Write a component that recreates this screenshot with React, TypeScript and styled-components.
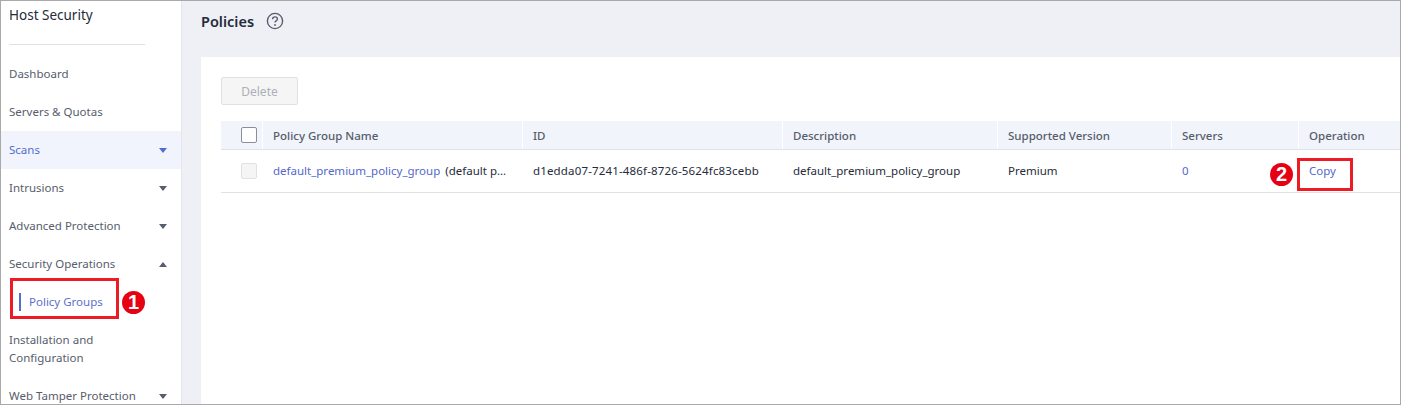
import React from "react";
import styled, { createGlobalStyle } from "styled-components";

const Global = createGlobalStyle`
  html, body { margin: 0; padding: 0; background: #fff; }
  body { font-family: "Noto Sans", "Open Sans", sans-serif; font-size: 11.5px; color: #252b3a; }
`;

const Frame = styled.div`
  position: relative;
  box-sizing: border-box;
  width: 1401px;
  height: 405px;
  border: 1px solid #a9a9a9;
  display: flex;
  overflow: hidden;
  background: #eef0f5;
`;

const Sidebar = styled.aside`
  flex: 0 0 180px;
  background: #fff;
  display: flex;
  flex-direction: column;
  height: 420px;
`;

const SideTitle = styled.div`
  height: 44px;
  margin: 0 36px 0 8px;
  box-sizing: border-box;
  padding-top: 4px;
  font-size: 13.5px;
  line-height: 20px;
  color: #252b3a;
  border-bottom: 1px solid #dfe1e6;
  flex: none;
`;

const SideList = styled.nav`
  margin-top: 10px;
  display: flex;
  flex-direction: column;
`;

const SideItem = styled.div<{ $active?: boolean; $tall?: boolean }>`
  display: flex;
  align-items: center;
  justify-content: space-between;
  box-sizing: border-box;
  min-height: ${(p) => (p.$tall ? "56px" : "38px")};
  padding: 0 14px 0 8px;
  line-height: 18px;
  color: ${(p) => (p.$active ? "#526ecc" : "#575d6c")};
  background: ${(p) => (p.$active ? "#f1f4fc" : "#fff")};
`;

const SubItem = styled.div`
  height: 38px;
  box-sizing: border-box;
  padding: 0 0 1px 18px;
  display: flex;
  align-items: center;
  gap: 8px;
  color: #5e6fcb;
  &::before {
    content: "";
    width: 2px;
    height: 18px;
    background: #526ecc;
  }
`;

const Caret = styled.span<{ $up?: boolean; $active?: boolean }>`
  width: 0;
  height: 0;
  border-left: 4px solid transparent;
  border-right: 4px solid transparent;
  ${(p) =>
    p.$up
      ? `border-bottom: 5px solid #575d6c;`
      : `border-top: 5px solid ${p.$active ? "#526ecc" : "#575d6c"};`}
`;

const Main = styled.main`
  flex: 1;
  min-width: 0;
  display: flex;
  flex-direction: column;
  border-left: 1px solid #e4e6ec;
`;

const Header = styled.header`
  height: 56px;
  flex: none;
  box-sizing: border-box;
  padding: 8px 0 0 19px;
  display: flex;
  align-items: flex-start;
  gap: 12px;
`;

const Title = styled.h1`
  margin: 0;
  font-size: 14.5px;
  line-height: 24px;
  font-weight: 600;
  color: #252b3a;
`;

const HelpIcon = styled.svg`
  width: 18px;
  height: 18px;
  margin-top: 3px;
`;

const Panel = styled.section`
  flex: 1;
  margin-left: 19px;
  background: #fff;
  padding: 20px 0 0 20px;
`;

const DeleteButton = styled.button`
  display: block;
  box-sizing: border-box;
  width: 77px;
  height: 28px;
  padding: 0;
  font: inherit;
  font-size: 12px;
  color: #adb0b8;
  background: #f5f5f6;
  border: 1px solid #dfe1e6;
  border-radius: 2px;
`;

const Table = styled.div`
  margin-top: 16px;
`;

const Row = styled.div<{ $head?: boolean }>`
  display: grid;
  grid-template-columns: 41px 260px 260px 215px 174px 127px 1fr;
  box-sizing: border-box;
  height: ${(p) => (p.$head ? "29px" : "43px")};
  background: ${(p) => (p.$head ? "#f1f4fb" : "#fff")};
  border-bottom: 1px solid #dfe1e6;
  color: ${(p) => (p.$head ? "#575d6c" : "#252b3a")};
  font-weight: ${(p) => (p.$head ? 500 : 400)};
`;

const Cell = styled.div<{ $head?: boolean }>`
  display: flex;
  align-items: center;
  padding: ${(p) => (p.$head ? "0 0 0 10px" : "0 0 2px 10px")};
  white-space: nowrap;
  overflow: hidden;
  border-left: ${(p) => (p.$head ? "1px solid #fff" : "none")};
  margin-left: ${(p) => (p.$head ? "0" : "1px")};
`;

const CheckCell = styled.div`
  display: flex;
  align-items: center;
  padding-left: 20px;
`;

const Checkbox = styled.span<{ $disabled?: boolean }>`
  box-sizing: border-box;
  width: 16px;
  height: 16px;
  border-radius: 2px;
  border: 1px solid ${(p) => (p.$disabled ? "#dfe1e6" : "#8a8e99")};
  background: ${(p) => (p.$disabled ? "#f5f5f6" : "#fff")};
`;

const Link = styled.a`
  color: #5468cc;
  text-decoration: none;
`;

const Note = styled.span`
  margin-left: 5px;
`;

const IdText = styled.span`
  letter-spacing: 0.16px;
`;

const Callout = styled.div<{ $x: number; $y: number; $w: number; $h: number }>`
  position: absolute;
  box-sizing: border-box;
  left: ${(p) => p.$x}px;
  top: ${(p) => p.$y}px;
  width: ${(p) => p.$w}px;
  height: ${(p) => p.$h}px;
  border: 3px solid #ed1c24;
`;

const Badge = styled.span<{ $x: number; $y: number }>`
  position: absolute;
  left: ${(p) => p.$x}px;
  top: ${(p) => p.$y}px;
  width: 23px;
  height: 23px;
  border-radius: 50%;
  background: #e60012;
  color: #fff;
  font-family: "Liberation Sans", sans-serif;
  font-weight: 700;
  font-size: 20px;
  line-height: 23px;
  text-align: center;
`;

const items = [
  { label: "Dashboard" },
  { label: "Servers & Quotas" },
  { label: "Scans", caret: "down", active: true },
  { label: "Intrusions", caret: "down" },
  { label: "Advanced Protection", caret: "down" },
  { label: "Security Operations", caret: "up" },
];

export default function App() {
  return (
    <>
      <Global />
      <Frame>
        <Sidebar>
          <SideTitle>Host Security</SideTitle>
          <SideList>
            {items.map((it) => (
              <SideItem key={it.label} $active={it.active}>
                {it.label}
                {it.caret && <Caret $up={it.caret === "up"} $active={it.active} />}
              </SideItem>
            ))}
            <SubItem>Policy Groups</SubItem>
            <SideItem $tall>
              Installation and
              <br />
              Configuration
            </SideItem>
            <SideItem>
              Web Tamper Protection
              <Caret />
            </SideItem>
          </SideList>
        </Sidebar>
        <Main>
          <Header>
            <Title>Policies</Title>
            <HelpIcon viewBox="0 0 18 18" fill="none">
              <circle cx="9" cy="9" r="7.6" stroke="#575d6c" strokeWidth="1.4" />
              <path
                d="M6.6 7.2c0-1.4 1.1-2.3 2.4-2.3s2.4.9 2.4 2.1c0 1.9-2.4 1.8-2.4 3.6"
                stroke="#575d6c"
                strokeWidth="1.4"
              />
              <circle cx="9" cy="13" r=".9" fill="#575d6c" />
            </HelpIcon>
          </Header>
          <Panel>
            <DeleteButton disabled>Delete</DeleteButton>
            <Table>
              <Row $head>
                <CheckCell>
                  <Checkbox />
                </CheckCell>
                <Cell $head>Policy Group Name</Cell>
                <Cell $head>ID</Cell>
                <Cell $head>Description</Cell>
                <Cell $head>Supported Version</Cell>
                <Cell $head>Servers</Cell>
                <Cell $head>Operation</Cell>
              </Row>
              <Row>
                <CheckCell>
                  <Checkbox $disabled />
                </CheckCell>
                <Cell>
                  <Link>default_premium_policy_group</Link>
                  <Note>(default p...</Note>
                </Cell>
                <Cell>
                  <IdText>d1edda07-7241-486f-8726-5624fc83cebb</IdText>
                </Cell>
                <Cell>default_premium_policy_group</Cell>
                <Cell>Premium</Cell>
                <Cell>
                  <Link>0</Link>
                </Cell>
                <Cell>
                  <Link>Copy</Link>
                </Cell>
              </Row>
            </Table>
          </Panel>
        </Main>
        <Callout $x={9} $y={277} $w={109} $h={41} />
        <Badge $x={121} $y={290}>1</Badge>
        <Callout $x={1296} $y={157} $w={56} $h={33} />
        <Badge $x={1269} $y={162}>2</Badge>
      </Frame>
    </>
  );
}
